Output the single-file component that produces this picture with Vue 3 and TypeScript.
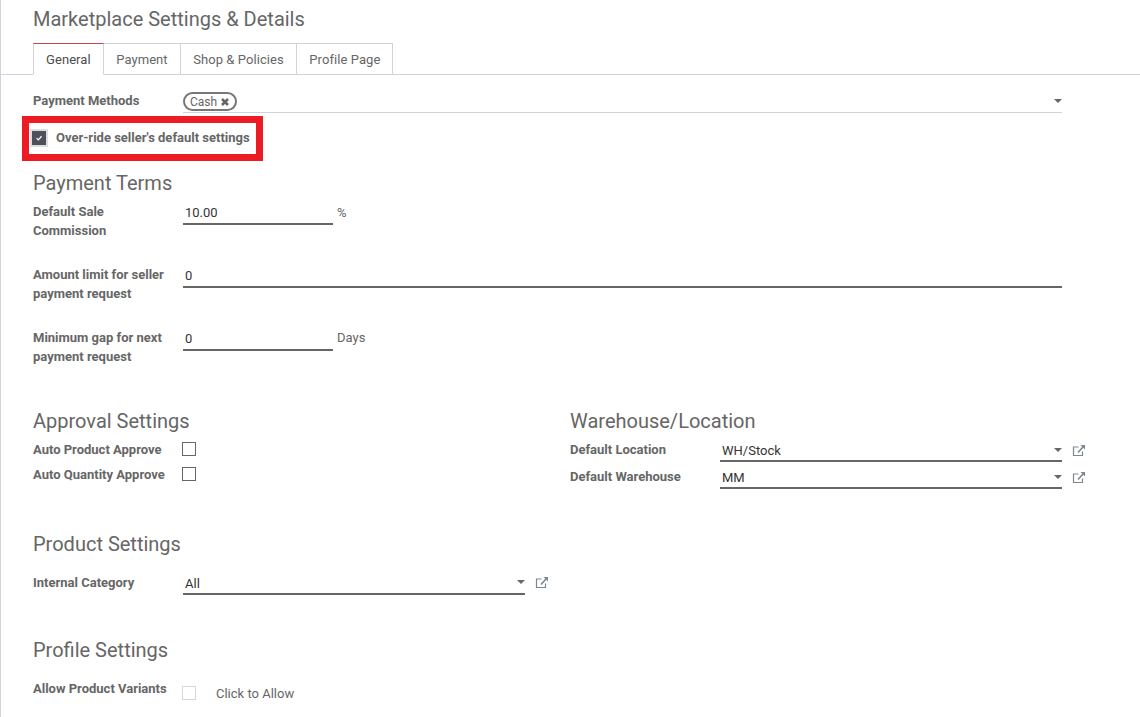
<script setup lang="ts">
const tabs: string[] = ['General', 'Payment', 'Shop & Policies', 'Profile Page']
</script>

<template>
  <div class="page">
    <h2 class="title">Marketplace Settings &amp; Details</h2>
    <ul class="tabs">
      <li v-for="(t, i) in tabs" :key="t" class="tab" :class="{ active: i === 0 }">{{ t }}</li>
    </ul>
    <div class="sheet">
      <div class="row methods">
        <label class="lbl">Payment Methods</label>
        <div class="tagfield">
          <span class="tag">Cash <svg class="x" viewBox="0 0 10 10"><path d="M2 2l6 6M8 2l-6 6" stroke="#666" stroke-width="2.6" fill="none"/></svg></span>
          <i class="caret"></i>
        </div>
      </div>
      <div class="override">
        <span class="box checked"><svg viewBox="0 0 10 10" width="8" height="8"><path d="M2 5.2l2.2 2.2 4-4.6" stroke="#fff" stroke-width="1.6" fill="none"/></svg></span>
        <label class="lbl">Over-ride seller's default settings</label>
        <div class="redbox"></div>
      </div>

      <h3 class="h terms">Payment Terms</h3>
      <div class="row t1">
        <label class="lbl two">Default Sale Commission</label>
        <div class="input short">10.00</div>
        <span class="unit">%</span>
      </div>
      <div class="row t2">
        <label class="lbl two">Amount limit for seller payment request</label>
        <div class="input wide">0</div>
      </div>
      <div class="row t3">
        <label class="lbl two">Minimum gap for next payment request</label>
        <div class="input short">0</div>
        <span class="unit">Days</span>
      </div>

      <div class="cols">
        <div class="col-left">
          <h3 class="h">Approval Settings</h3>
          <div class="row chk first"><label class="lbl">Auto Product Approve</label><span class="box"></span></div>
          <div class="row chk"><label class="lbl">Auto Quantity Approve</label><span class="box"></span></div>
        </div>
        <div class="col-right">
          <h3 class="h">Warehouse/Location</h3>
          <div class="row wh first">
            <label class="lbl">Default Location</label>
            <div class="input sel">WH/Stock<i class="caret"></i></div>
            <svg class="ext" viewBox="0 0 14 14"><path d="M10.5 7.5v4H1.5V3h5" stroke="#7d8790" stroke-width="1.2" fill="none"/><path d="M6 8.5l5-5.5" stroke="#7d8790" stroke-width="1.6" fill="none"/><path d="M8.5 1H13v4.5z" fill="#7d8790"/></svg>
          </div>
          <div class="row wh">
            <label class="lbl">Default Warehouse</label>
            <div class="input sel">MM<i class="caret"></i></div>
            <svg class="ext" viewBox="0 0 14 14"><path d="M10.5 7.5v4H1.5V3h5" stroke="#7d8790" stroke-width="1.2" fill="none"/><path d="M6 8.5l5-5.5" stroke="#7d8790" stroke-width="1.6" fill="none"/><path d="M8.5 1H13v4.5z" fill="#7d8790"/></svg>
          </div>
        </div>
      </div>

      <h3 class="h product">Product Settings</h3>
      <div class="row cat">
        <label class="lbl">Internal Category</label>
        <div class="input sel catfield">All<i class="caret"></i></div>
        <svg class="ext" viewBox="0 0 14 14"><path d="M10.5 7.5v4H1.5V3h5" stroke="#7d8790" stroke-width="1.2" fill="none"/><path d="M6 8.5l5-5.5" stroke="#7d8790" stroke-width="1.6" fill="none"/><path d="M8.5 1H13v4.5z" fill="#7d8790"/></svg>
      </div>

      <h3 class="h profile">Profile Settings</h3>
      <div class="row allow">
        <label class="lbl">Allow Product Variants</label>
        <span class="box faint"></span>
        <span class="click">Click to Allow</span>
      </div>
    </div>
  </div>
</template>

<style scoped>
.page {
  width: 1140px;
  height: 717px;
  box-sizing: border-box;
  overflow: hidden;
  background: #fff;
  border-left: 1px solid #ced4da;
  font-family: Roboto, "Liberation Sans", sans-serif;
  font-size: 13px;
  color: #666;
}
.title {
  margin: 0;
  padding: 7px 0 0 32px;
  height: 43px;
  box-sizing: border-box;
  font-size: 20px;
  line-height: 24px;
  font-weight: 400;
  color: #666;
}
.tabs {
  display: flex;
  list-style: none;
  margin: 0;
  padding: 0 0 0 32px;
  height: 32px;
  box-sizing: border-box;
  border-bottom: 1px solid #ced4da;
}
.tab {
  height: 32px;
  box-sizing: border-box;
  padding: 7px 12px 0 12.5px;
  line-height: 17px;
  letter-spacing: 0.07px;
  border: 1px solid #ced4da;
  border-left: 0;
  color: #666;
}
.tab.active {
  padding-left: 12px;
  border-left: 1px solid #ced4da;
  border-top: 1px solid #c0474b;
  border-bottom: 1px solid #fff;
  color: #4c4c4c;
}
.sheet {
  padding: 0 0 0 32px;
}
.row {
  display: flex;
  align-items: flex-start;
}
.lbl {
  display: block;
  font-weight: 700;
  color: #666;
  line-height: 19px;
}
.row > .lbl {
  width: 135px;
  padding-right: 15px;
  flex: none;
}
.methods {
  margin-top: 16px;
}
.tagfield {
  position: relative;
  width: 879px;
  height: 21px;
  border-bottom: 1px solid #ced4da;
}
.tag {
  display: inline-flex;
  align-items: center;
  gap: 3px;
  height: 19px;
  box-sizing: border-box;
  border: 2px solid #777;
  border-radius: 10px;
  padding: 0 5px;
  font-size: 12px;
  color: #666;
  margin-top: 1px;
}
.x {
  width: 10px;
  height: 10px;
}
.caret {
  position: absolute;
  right: 0;
  top: 8px;
  width: 0;
  height: 0;
  border-left: 4px solid transparent;
  border-right: 4px solid transparent;
  border-top: 4px solid #666;
}
.override {
  position: relative;
  display: flex;
  align-items: center;
  margin-top: 15px;
  height: 19px;
}
.override .lbl {
  margin-left: 10px;
}
.redbox {
  position: absolute;
  left: -11px;
  top: -12px;
  width: 241px;
  height: 45px;
  box-sizing: border-box;
  border: 7px solid #ed1c24;
  pointer-events: none;
}
.box {
  display: inline-flex;
  align-items: center;
  justify-content: center;
  width: 14px;
  height: 14px;
  box-sizing: border-box;
  border: 1px solid #666;
  flex: none;
  margin-left: -1px;
}
.box.checked {
  width: 14px;
  height: 14px;
  background: #4f4f5c;
  border-color: #4f4f5c;
  outline: 2px solid #ddd;
  margin-left: -1px;
}
.box.faint {
  border-color: #d8d8d8;
}
.h {
  margin: 0;
  font-size: 20px;
  line-height: 24px;
  font-weight: 400;
  color: #666;
}
.terms {
  margin-top: 24px;
}
.input {
  position: relative;
  box-sizing: border-box;
  height: 23px;
  padding: 2px 0 0 2px;
  line-height: 17px;
  color: #333;
  border-bottom: 2px solid #666;
  flex: none;
}
.short {
  width: 150px;
}
.wide {
  width: 879px;
}
.unit {
  margin-left: 4px;
  line-height: 17px;
  padding-top: 2px;
}
.t3 .unit {
  padding-top: 1px;
}
.t1 {
  margin-top: 7px;
}
.t2 {
  margin-top: 25px;
}
.t3 {
  margin-top: 25px;
}
.cols {
  display: flex;
  margin-top: 43px;
}
.col-left {
  width: 537px;
  flex: none;
}
.chk {
  height: 25px;
  align-items: center;
}
.chk > .lbl {
  margin-top: 2px;
}
.chk.first {
  margin-top: 3px;
}
.wh {
  height: 27px;
}
.wh.first {
  margin-top: 4px;
}
.wh .input {
  width: 342px;
  margin-top: 2px;
  padding-top: 3px;
}
.col-right .row > .lbl {
  padding-top: 3px;
}
.sel .caret {
  top: 9px;
}
.ext {
  width: 14px;
  height: 14px;
  margin: 7px 0 0 10px;
  flex: none;
}
.product {
  margin-top: 41px;
}
.cat {
  margin-top: 16px;
}
.cat > .lbl {
  padding-top: 1px;
}
.catfield {
  width: 342px;
  padding-top: 3px;
}
.cat .ext {
  margin-top: 4px;
}
.cat .caret {
  top: 8px;
}
.profile {
  margin-top: 43px;
}
.allow {
  margin-top: 17px;
}
.allow .box {
  margin-top: 7px;
  margin-left: -1px;
}
.click {
  margin-left: 20px;
  line-height: 17px;
  padding-top: 6px;
}
</style>

<style>
html, body { margin: 0; padding: 0; background: #fff; }
</style>
